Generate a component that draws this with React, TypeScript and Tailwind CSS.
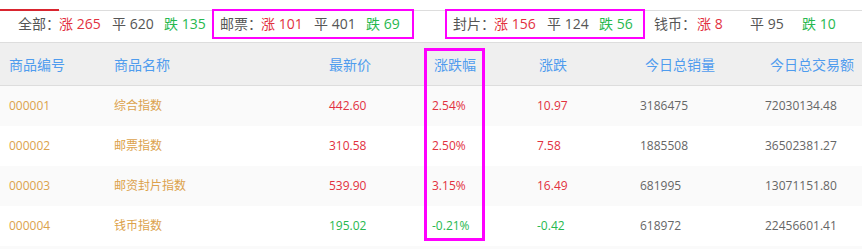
import React from "react";

type Group = {
  label: string;
  up: number;
  flat: number;
  down: number;
  boxed: boolean;
  outer: string;
  labelW: string;
  downW: string;
};

const groups: Group[] = [
  { label: "全部：", up: 265, flat: 620, down: 135, boxed: false, outer: "", labelW: "w-[41px]", downW: "w-[46px]" },
  { label: "邮票：", up: 101, flat: 401, down: 69, boxed: true, outer: "", labelW: "w-[41px]", downW: "w-[46px]" },
  { label: "封片：", up: 156, flat: 124, down: 56, boxed: true, outer: "ml-[31px]", labelW: "w-[41px]", downW: "w-[44px]" },
  { label: "钱币：", up: 8, flat: 95, down: 10, boxed: false, outer: "ml-[1px]", labelW: "w-[43px]", downW: "w-[46px]" },
];

const rows = [
  { code: "000001", name: "综合指数", price: "442.60", pct: "2.54%", chg: "10.97", vol: "3186475", amt: "72030134.48", up: true },
  { code: "000002", name: "邮票指数", price: "310.58", pct: "2.50%", chg: "7.58", vol: "1885508", amt: "36502381.27", up: true },
  { code: "000003", name: "邮资封片指数", price: "539.90", pct: "3.15%", chg: "16.49", vol: "681995", amt: "13071151.80", up: true },
  { code: "000004", name: "钱币指数", price: "195.02", pct: "-0.21%", chg: "-0.42", vol: "618972", amt: "22456601.41", up: false },
];

const headers = ["商品编号", "商品名称", "最新价", "涨跌幅", "涨跌", "今日总销量", "今日总交易额"];

export default function App() {
  return (
    <div
      className="w-[862px] h-[249px] overflow-hidden bg-white"
      style={{ fontFamily: '"Open Sans", "Noto Sans CJK SC", sans-serif' }}
    >
      {/* Tabs line */}
      <div className="flex h-[11px]">
        <div className="w-[59px] border-b-2 border-[#d9252f]" />
        <div className="flex-1 border-b border-[#dddddd]" />
      </div>

      {/* Summary */}
      <div className="flex h-[31px] pl-[10px] text-[14px] leading-none whitespace-nowrap">
        {groups.map((g, i) => (
          <div
            key={i}
            className={`-mt-[2px] flex h-[30px] shrink-0 items-center border-2 pl-[6px] ${
              g.boxed ? "border-[#ff00ff]" : "border-transparent"
            } ${g.outer}`}
          >
            <span className={`${g.labelW} shrink-0 overflow-visible text-[#555555]`}>{g.label}</span>
            <span className="w-[53px] shrink-0 text-[#e2313f]">涨 {g.up}</span>
            <span className="w-[52px] shrink-0 text-[#555555]">平 {g.flat}</span>
            <span className={`${g.downW} shrink-0 text-[#27b84f]`}>跌 {g.down}</span>
          </div>
        ))}
      </div>

      {/* Table */}
      <div className="relative">
        <div className="grid h-[44px] grid-cols-[105px_215px_105px_105px_106px_125px_1fr] items-center border-y border-[#dddddd] bg-[#efefef] pl-[9px] text-[14px] text-[#4f9cee]">
          {headers.map((h) => (
            <div key={h}>{h}</div>
          ))}
        </div>

        {rows.map((r, i) => (
          <div
            key={r.code}
            className={`grid h-[40px] grid-cols-[105px_215px_103px_105px_103px_125px_1fr] items-center pl-[9px] text-[12px] ${
              i % 2 === 0 ? "bg-[#fafafa]" : "bg-white"
            }`}
          >
            <div className="text-[#dca24c]">{r.code}</div>
            <div className="text-[#dca24c]">{r.name}</div>
            <div className={r.up ? "text-[#e2313f]" : "text-[#27b84f]"}>{r.price}</div>
            <div className={r.up ? "text-[#e2313f]" : "text-[#27b84f]"}>{r.pct}</div>
            <div className={r.up ? "text-[#e2313f]" : "text-[#27b84f]"}>{r.chg}</div>
            <div className="text-[#666666]">{r.vol}</div>
            <div className="text-[#666666]">{r.amt}</div>
          </div>
        ))}
        <div className="h-[40px] bg-[#fafafa]" />

        {/* highlight column */}
        <div className="pointer-events-none absolute left-[424px] top-[6px] h-[193px] w-[61px] border-[3px] border-[#ff00ff]" />
      </div>
    </div>
  );
}
